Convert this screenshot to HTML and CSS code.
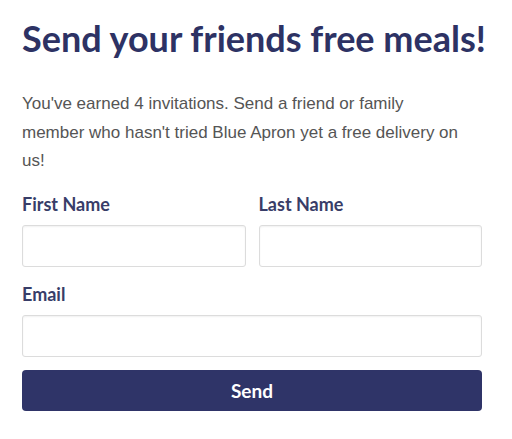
FILE: index.html
```html
<!DOCTYPE html>
<html lang="en">
<head>
  <meta charset="UTF-8">
  <title>Invite Friends</title>
  <link rel="stylesheet" href="styles.css">
</head>
<body>

  <div class="invite">
    <h1>Send your friends free meals!</h1>
    <p class="intro">You've earned 4 invitations. Send a friend or family<br>member who hasn't tried Blue Apron yet a free delivery on us!</p>

    <form class="invite-form" onsubmit="return false;">
      <div class="row">
        <label class="field">
          <span>First Name</span>
          <input type="text">
        </label>
        <label class="field">
          <span>Last Name</span>
          <input type="text">
        </label>
      </div>
      <label class="field">
        <span>Email</span>
        <input type="email">
      </label>
      <button type="submit">Send</button>
    </form>
  </div>

</body>
</html>
```

FILE: styles.css
```css
body {
  margin: 0;
  background: #fff;
  font-family: "Liberation Sans", Arial, sans-serif;
}
.invite {
  width: 460px;
  padding: 18px 30px 0 22px;
}
h1 {
  margin: 0;
  font-family: Lato, "Open Sans", sans-serif;
  font-weight: 700;
  font-size: 36px;
  line-height: 40px;
  white-space: nowrap;
  color: #2d3264;
}
.intro {
  margin: 32px 0 0;
  font-size: 17px;
  line-height: 28.5px;
  color: #555;
}
.invite-form {
  margin-top: 18px;
  display: flex;
  flex-direction: column;
}
.row {
  display: flex;
  gap: 13px;
}
.row .field {
  flex: 1;
}
.field {
  display: flex;
  flex-direction: column;
}
.field span {
  font-family: Lato, "Open Sans", sans-serif;
  font-weight: 700;
  font-size: 18px;
  line-height: 20px;
  color: #383d68;
  margin-bottom: 11px;
}
.field input {
  height: 42px;
  box-sizing: border-box;
  border: 1px solid #dcdcdc;
  border-radius: 3px;
  box-shadow: inset 0 1px 2px rgba(0,0,0,0.06);
  margin-bottom: 17px;
  font-size: 15px;
  padding: 0 10px;
}
button {
  margin-top: -4px;
  height: 41px;
  border: none;
  border-radius: 4px;
  background: #2f3468;
  color: #fff;
  font-family: Lato, "Open Sans", sans-serif;
  font-weight: 700;
  font-size: 19px;
  cursor: pointer;
}
```
